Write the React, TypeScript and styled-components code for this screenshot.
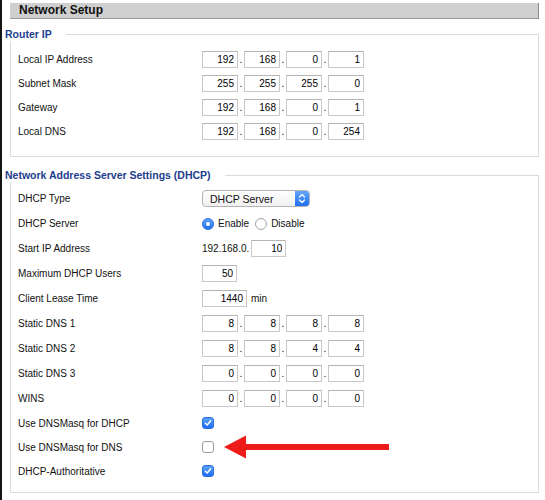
import React from 'react';
import styled, { createGlobalStyle } from 'styled-components';

const GlobalStyle = createGlobalStyle`
  html, body {
    margin: 0;
    padding: 0;
    background: #fff;
  }
  body {
    font-family: "Liberation Sans", Arial, sans-serif;
    font-size: 10px;
    color: #111;
  }
`;

const Page = styled.div`
  min-height: 500px;
  box-sizing: border-box;
  border-left: 2px solid #151515;
  padding: 3px 6px 0 3px;
`;

const Header = styled.div`
  margin-left: 5px;
  height: 16px;
  box-sizing: border-box;
  background: #cfcfcf;
  border-bottom: 1px solid #999;
  border-right: 1px solid #8c8c8c;
  padding-left: 9px;
  font-size: 12px;
  font-weight: bold;
  line-height: 15px;
  color: #111;
`;

const Section = styled.section<{ $gap: number }>`
  margin-top: ${p => p.$gap}px;
`;

const LegendRow = styled.div`
  display: flex;
  height: 14px;
`;

const Legend = styled.div`
  font-size: 10.5px;
  font-weight: bold;
  line-height: 14px;
  color: #213d8e;
  padding-right: 14px;
  white-space: nowrap;
`;

const Rule = styled.div`
  flex: 1;
  align-self: flex-end;
  height: 7px;
  box-sizing: border-box;
  border-top: 1px solid #dadada;
  border-right: 1px solid #dadada;
`;

const Box = styled.div<{ $pt: number; $pb: number }>`
  margin-left: 5px;
  border: 1px solid #dadada;
  border-top: none;
  padding: ${p => p.$pt}px 0 ${p => p.$pb}px 7px;
`;

const Row = styled.div<{ $h?: number }>`
  display: flex;
  align-items: center;
  height: ${p => p.$h ?? 25}px;
`;

const Label = styled.div`
  width: 184px;
  flex: none;
  white-space: nowrap;
`;

const Controls = styled.div`
  display: flex;
  align-items: center;
`;

const Field = styled.input<{ $w?: number; $ml?: number }>`
  width: ${p => p.$w ?? 36}px;
  height: 17px;
  box-sizing: border-box;
  margin: 0 0 0 ${p => p.$ml ?? 0}px;
  padding: 0 3px;
  border: 1px solid #c8c8c8;
  border-top-color: #b4b4b4;
  border-radius: 0;
  background: #fff;
  font: 10px "Liberation Sans", Arial, sans-serif;
  color: #000;
  text-align: right;
  outline: none;
`;

const Dot = styled.span`
  width: 6px;
  text-align: center;
  line-height: 17px;
`;

const Unit = styled.span`
  margin-left: 4px;
`;

const Select = styled.div`
  width: 108px;
  height: 17px;
  box-sizing: border-box;
  display: flex;
  align-items: center;
  padding-left: 7px;
  border: 1px solid #b3b3b3;
  border-radius: 4px;
  background: linear-gradient(#ffffff, #f0f0f0);
  overflow: hidden;
  font-size: 10.5px;
  color: #111;
  cursor: default;
`;

const SelectButton = styled.span`
  margin-left: auto;
  width: 14px;
  height: 100%;
  display: flex;
  align-items: center;
  justify-content: center;
  background: linear-gradient(#63a6fc, #1f6ff0);
`;

const Radio = styled.span<{ $on?: boolean }>`
  width: 12px;
  height: 12px;
  box-sizing: border-box;
  border-radius: 50%;
  border: 1px solid ${p => (p.$on ? '#2a6fe0' : '#a5a5a5')};
  background: ${p => (p.$on ? 'linear-gradient(#5ea3fb, #1e6ef0)' : '#fff')};
  display: flex;
  align-items: center;
  justify-content: center;

  &::after {
    content: '';
    display: ${p => (p.$on ? 'block' : 'none')};
    width: 4px;
    height: 4px;
    border-radius: 50%;
    background: #fff;
  }
`;

const OptionText = styled.span`
  margin: 0 6px 0 4px;
`;

const Check = styled.span<{ $on?: boolean }>`
  width: 12px;
  height: 12px;
  box-sizing: border-box;
  border-radius: 3px;
  border: 1px solid ${p => (p.$on ? '#2a6fe0' : '#9c9c9c')};
  background: ${p => (p.$on ? 'linear-gradient(#5ea3fb, #1e6ef0)' : '#fff')};
  display: flex;
  align-items: center;
  justify-content: center;
`;

const Arrow = styled.svg`
  margin-left: 10px;
  flex: none;
`;

const IpFields = ({ values }: { values: string[] }) => (
  <Controls>
    {values.map((v, i) => (
      <React.Fragment key={i}>
        <Field defaultValue={v} />
        {i < values.length - 1 && <Dot>.</Dot>}
      </React.Fragment>
    ))}
  </Controls>
);

const Tick = () => (
  <svg width="8" height="8" viewBox="0 0 8 8">
    <path d="M1.3 4.2 L3.2 6 L6.7 1.8" fill="none" stroke="#fff" strokeWidth="1.4" strokeLinecap="round" strokeLinejoin="round" />
  </svg>
);

const routerRows = [
  { label: 'Local IP Address', ip: ['192', '168', '0', '1'] },
  { label: 'Subnet Mask', ip: ['255', '255', '255', '0'] },
  { label: 'Gateway', ip: ['192', '168', '0', '1'] },
  { label: 'Local DNS', ip: ['192', '168', '0', '254'] },
];

const dnsRows = [
  { label: 'Static DNS 1', ip: ['8', '8', '8', '8'] },
  { label: 'Static DNS 2', ip: ['8', '8', '4', '4'] },
  { label: 'Static DNS 3', ip: ['0', '0', '0', '0'] },
  { label: 'WINS', ip: ['0', '0', '0', '0'] },
];

export default function App() {
  return (
    <>
      <GlobalStyle />
      <Page>
        <Header>Network Setup</Header>

        <Section $gap={8}>
          <LegendRow>
            <Legend>Router IP</Legend>
            <Rule />
          </LegendRow>
          <Box $pt={6} $pb={13}>
            {routerRows.map(r => (
              <Row key={r.label} $h={24}>
                <Label>{r.label}</Label>
                <IpFields values={r.ip} />
              </Row>
            ))}
          </Box>
        </Section>

        <Section $gap={11}>
          <LegendRow>
            <Legend>Network Address Server Settings (DHCP)</Legend>
            <Rule />
          </LegendRow>
          <Box $pt={4} $pb={9}>
            <Row>
              <Label>DHCP Type</Label>
              <Select role="combobox">
                DHCP Server
                <SelectButton>
                  <svg width="8" height="11" viewBox="0 0 8 11">
                    <path d="M1.5 4 L4 1.5 L6.5 4 M1.5 7 L4 9.5 L6.5 7" fill="none" stroke="#fff" strokeWidth="1.3" strokeLinecap="round" strokeLinejoin="round" />
                  </svg>
                </SelectButton>
              </Select>
            </Row>
            <Row>
              <Label>DHCP Server</Label>
              <Controls>
                <Radio $on />
                <OptionText>Enable</OptionText>
                <Radio />
                <OptionText>Disable</OptionText>
              </Controls>
            </Row>
            <Row>
              <Label>Start IP Address</Label>
              <Controls>
                192.168.0.
                <Field $w={35} $ml={2} defaultValue="10" />
              </Controls>
            </Row>
            <Row>
              <Label>Maximum DHCP Users</Label>
              <Controls>
                <Field $w={35} defaultValue="50" />
              </Controls>
            </Row>
            <Row>
              <Label>Client Lease Time</Label>
              <Controls>
                <Field $w={45} defaultValue="1440" />
                <Unit>min</Unit>
              </Controls>
            </Row>
            {dnsRows.map(r => (
              <Row key={r.label}>
                <Label>{r.label}</Label>
                <IpFields values={r.ip} />
              </Row>
            ))}
            <Row $h={24}>
              <Label>Use DNSMasq for DHCP</Label>
              <Check $on>
                <Tick />
              </Check>
            </Row>
            <Row $h={24}>
              <Label>Use DNSMasq for DNS</Label>
              <Check />
              <Arrow width="166" height="24" viewBox="0 0 166 24">
                <path d="M0 12 L22 0.5 V9 H165 V15 H22 V23.5 Z" fill="#ee1b1b" />
              </Arrow>
            </Row>
            <Row $h={24}>
              <Label>DHCP-Authoritative</Label>
              <Check $on>
                <Tick />
              </Check>
            </Row>
          </Box>
        </Section>
      </Page>
    </>
  );
}
